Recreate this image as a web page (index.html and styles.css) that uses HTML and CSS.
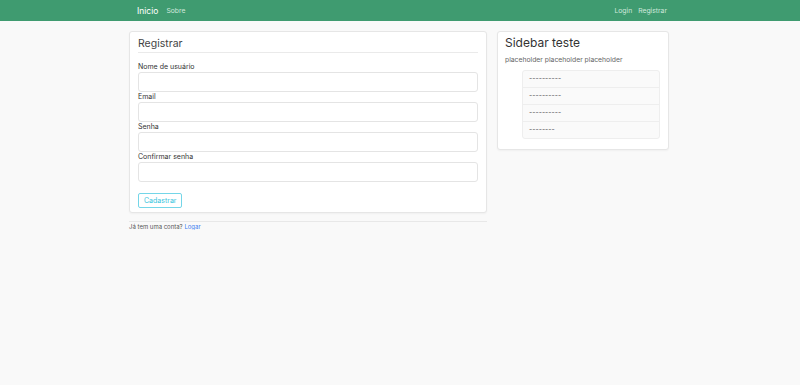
FILE: index.html
```html
<!DOCTYPE html>
<html lang="pt">
<head>
    <meta charset="UTF-8">
    <meta name="viewport" content="width=device-width, initial-scale=1.0">
    <title>Registrar</title>
    <link rel="stylesheet" href="styles.css">
</head>
<body>

<nav class="navbar">
    <div class="nav-inner">
        <div class="nav-left">
            <a class="brand" href="#">Inicio</a>
            <a class="nav-link" href="#">Sobre</a>
        </div>
        <div class="nav-right">
            <a class="nav-link" href="#">Login</a>
            <a class="nav-link" href="#">Registrar</a>
        </div>
    </div>
</nav>

<main class="container">
    <div class="main-col">
        <div class="card">
            <form>
                <fieldset>
                    <legend>Registrar</legend>
                    <div class="field">
                        <label>Nome de usuário</label>
                        <input type="text">
                    </div>
                    <div class="field">
                        <label>Email</label>
                        <input type="text">
                    </div>
                    <div class="field">
                        <label>Senha</label>
                        <input type="password">
                    </div>
                    <div class="field">
                        <label>Confirmar senha</label>
                        <input type="password">
                    </div>
                </fieldset>
                <button type="button" class="btn-outline">Cadastrar</button>
            </form>
        </div>
        <div class="footer-note">
            <small>Já tem uma conta? <a href="#">Logar</a></small>
        </div>
    </div>

    <div class="side-col">
        <div class="card">
            <h3>Sidebar teste</h3>
            <p class="muted">placeholder placeholder placeholder</p>
            <ul class="list-group">
                <li>----------</li>
                <li>----------</li>
                <li>----------</li>
                <li>--------</li>
            </ul>
        </div>
    </div>
</main>

</body>
</html>
```

FILE: styles.css
```css
body {
    font-family: 'Inter', sans-serif;
    background-color: #f9f9f9;
    color: #333;
    margin: 0;
}

a {
    text-decoration: none;
}

.navbar {
    background-color: #3f9b70;
    height: 21px;
}

.nav-inner {
    width: 542px;
    margin: 0 auto;
    height: 100%;
    display: flex;
    justify-content: space-between;
    align-items: center;
    padding: 0 4px 0 8px;
    box-sizing: border-box;
}

.nav-left,
.nav-right {
    display: flex;
    align-items: center;
}

.brand {
    color: #fff;
    font-size: 8.5px;
    margin-right: 8px;
}

.nav-link {
    color: #cfe8dc;
    font-size: 6.8px;
}

.nav-right .nav-link + .nav-link {
    margin-left: 6px;
}

.container {
    width: 542px;
    margin: 10px auto 0;
    display: flex;
    gap: 10px;
    align-items: flex-start;
}

.main-col {
    width: 358px;
}

.side-col {
    width: 172px;
}

.card {
    background: #fff;
    border: 1px solid #e6e6e6;
    border-radius: 3px;
    box-shadow: 0 1px 2px rgba(0, 0, 0, 0.04);
    padding: 5px 8px 4px;
}

fieldset {
    border: none;
    margin: 0;
    padding: 0;
}

legend {
    font-size: 10.5px;
    line-height: 14px;
    color: #444;
    width: 100%;
    padding: 0 0 1px;
    border-bottom: 1px solid #eaeaea;
    margin-bottom: 9px;
}

.field {
    display: flex;
    flex-direction: column;
}

.field label {
    font-size: 7px;
    color: #333;
    line-height: 10px;
}

.field input {
    height: 20px;
    box-sizing: border-box;
    border: 1px solid #e4e4e4;
    border-radius: 3px;
    margin: 0;
    background: #fff;
}

.btn-outline {
    margin-top: 11px;
    font-family: 'Inter', sans-serif;
    font-size: 7px;
    color: #35c3dc;
    background: #fff;
    border: 1px solid #74d6e8;
    border-radius: 2px;
    height: 15px;
    padding: 0 5px;
}

.footer-note {
    border-top: 1px solid #e8e8e8;
    margin-top: 8px;
    padding-top: 1px;
    font-size: 6px;
    color: #555;
}

.footer-note small {
    font-size: 6px;
}

.footer-note a {
    color: #3b7bf0;
    text-decoration: underline;
}

.side-col .card {
    padding: 3px 8px 10px 7px;
}

.side-col h3 {
    font-size: 12px;
    line-height: 16px;
    font-weight: 400;
    color: #333;
    margin: 0 0 4px;
}

.muted {
    font-size: 6.8px;
    color: #666;
    margin: 0 0 6px;
}

.list-group {
    list-style: none;
    margin: 0 0 0 17px;
    padding: 0;
    border: 1px solid #eee;
    border-radius: 3px;
    background: #fafafa;
}

.list-group li {
    font-size: 7px;
    color: #555;
    height: 16px;
    line-height: 16px;
    padding: 0 6px;
    border-top: 1px solid #eeeeee;
}

.list-group li:first-child {
    border-top: none;
}
```
